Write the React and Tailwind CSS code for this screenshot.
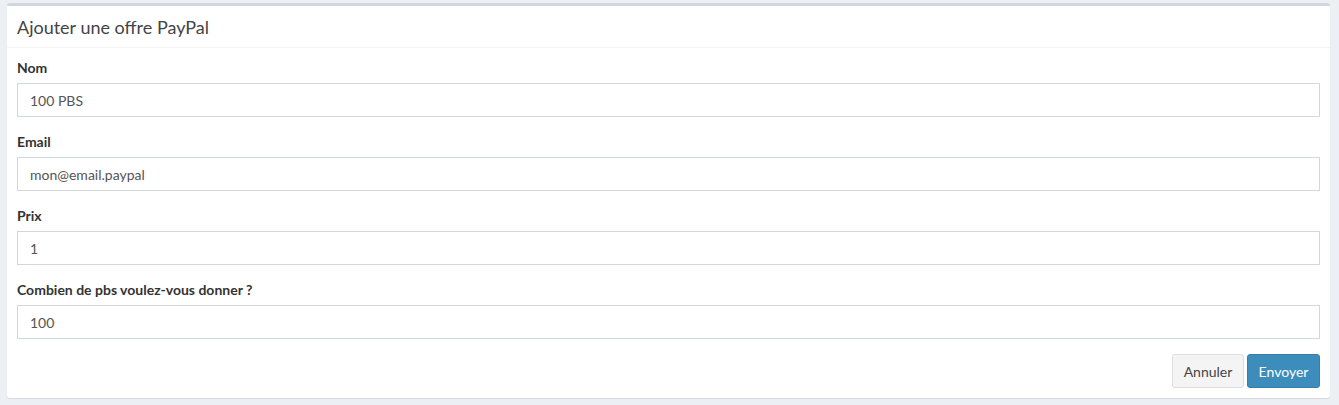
import React from 'react';

const FIELDS = [
  { label: 'Nom', value: '100 PBS' },
  { label: 'Email', value: 'mon@email.paypal' },
  { label: 'Prix', value: '1' },
  { label: 'Combien de pbs voulez-vous donner ?', value: '100' },
];

const Field = ({ label, value }) => (
  <div className="mb-[15px]">
    <label className="block mb-[5px] text-[14px] leading-[20px] font-bold text-[#333]">{label}</label>
    <input
      type="text"
      defaultValue={value}
      className="block w-full h-[34px] px-[12px] py-[6px] text-[14px] text-[#555] bg-white border border-[#d2d6de] outline-none"
    />
  </div>
);

export default function App() {
  return (
    <div className="min-h-screen bg-[#ecf0f5] pt-[3px] pl-[7px] pr-[9px] pb-[7px]" style={{ fontFamily: 'Lato, "Liberation Sans", sans-serif' }}>
      <div className="bg-white border-t-[3px] border-[#d2d6de] rounded-[3px] shadow-[0_1px_1px_rgba(0,0,0,0.1)]">
        <div className="px-[10px] pt-[11px] pb-[10px] border-b border-[#f4f4f4]">
          <h3 className="text-[18px] leading-[20px] text-[#444]">Ajouter une offre PayPal</h3>
        </div>
        <form className="px-[10px] pt-[10px]" onSubmit={(e) => e.preventDefault()}>
          {FIELDS.map((f) => (
            <Field key={f.label} label={f.label} value={f.value} />
          ))}
          <div className="flex justify-end gap-[3px] pb-[10px]">
            <button type="button" className="w-[72px] h-[34px] text-[14px] text-[#444] bg-[#f4f4f4] border border-[#ddd] rounded-[3px]">
              Annuler
            </button>
            <button type="submit" className="w-[73px] h-[34px] text-[14px] text-white bg-[#3c8dbc] border border-[#367fa9] rounded-[3px]">
              Envoyer
            </button>
          </div>
        </form>
      </div>
    </div>
  );
}
